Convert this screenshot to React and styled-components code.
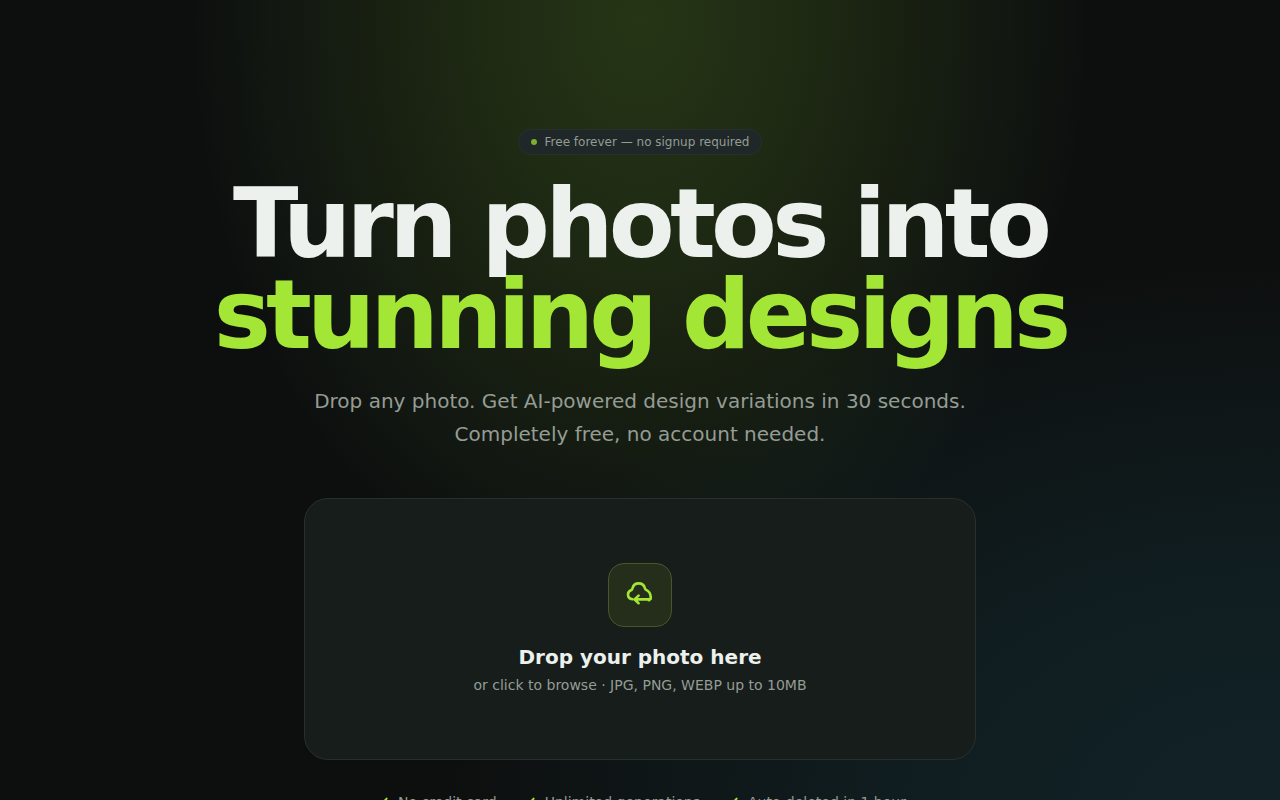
import React from 'react';
import styled, { createGlobalStyle } from 'styled-components';

const theme = {
  bg: '#0d0f0e',
  surface: '#171d1b',
  border: '#28302d',
  text: '#ecf1ee',
  muted: '#949c94',
  lime: '#a3e635',
};

const GlobalStyle = createGlobalStyle`
  * {
    box-sizing: border-box;
  }

  body {
    margin: 0;
    background: ${theme.bg};
    color: ${theme.text};
    font-family: 'DejaVu Sans', sans-serif;
  }
`;

const Hero = styled.main`
  display: flex;
  flex-direction: column;
  align-items: center;
  min-height: 100vh;
  padding: 129px 24px 64px;
  overflow: hidden;
  background:
    radial-gradient(ellipse 450px 600px at 50% 20px, rgba(150, 225, 55, 0.18), rgba(150, 225, 55, 0.13) 35%, rgba(150, 225, 55, 0.08) 60%, rgba(130, 225, 100, 0.04) 82%, transparent),
    radial-gradient(ellipse 840px 560px at 100% 820px, rgba(34, 110, 135, 0.2), rgba(34, 110, 135, 0.16) 40%, rgba(34, 110, 135, 0.07) 75%, transparent),
    ${theme.bg};
`;

const Badge = styled.div`
  display: flex;
  align-items: center;
  gap: 8px;
  margin: 0 0 24px;
  padding: 4px 12px;
  background: #1f2728;
  border: 1px solid #28302d;
  border-radius: 999px;
  color: ${theme.muted};
  font-size: 12px;
  line-height: 16px;
`;

const Dot = styled.span`
  width: 6px;
  height: 6px;
  border-radius: 50%;
  background: #7eb02d;
`;

const Title = styled.h1`
  margin: 0 0 24px;
  font-size: 96px;
  font-weight: 700;
  line-height: 91px;
  letter-spacing: -0.05em;
  text-align: center;
`;

const Accent = styled.span`
  display: block;
  color: ${theme.lime};
`;

const Lead = styled.p`
  max-width: 672px;
  margin: 0 0 47px;
  color: ${theme.muted};
  font-size: 20px;
  line-height: 33px;
  text-align: center;
`;

const DropZone = styled.button`
  display: flex;
  flex-direction: column;
  align-items: center;
  width: 100%;
  max-width: 672px;
  padding: 64px 32px;
  background: ${theme.surface};
  border: 1px solid ${theme.border};
  border-radius: 24px;
  color: ${theme.text};
  font-family: inherit;
  cursor: pointer;
`;

const IconTile = styled.span`
  display: flex;
  align-items: center;
  justify-content: center;
  width: 64px;
  height: 64px;
  margin: 0 0 16px;
  background: #242e1a;
  border: 1px solid #43592a;
  border-radius: 16px;
  color: ${theme.lime};
`;

const DropTitle = styled.span`
  font-size: 20px;
  font-weight: 700;
  line-height: 28px;
`;

const DropHint = styled.span`
  margin: 4px 0 0;
  color: ${theme.muted};
  font-size: 14px;
  line-height: 20px;
`;

const Perks = styled.ul`
  display: flex;
  flex-wrap: wrap;
  justify-content: center;
  gap: 8px 24px;
  margin: 32px 0 0;
  padding: 0;
  list-style: none;
  color: ${theme.muted};
  font-size: 14px;
  line-height: 20px;
`;

const Perk = styled.li`
  display: flex;
  align-items: center;
  gap: 8px;

  svg {
    color: ${theme.lime};
  }
`;

const perks = ['No credit card', 'Unlimited generations', 'Auto-deleted in 1 hour'];

const UploadIcon = () => (
  <svg
    width="28"
    height="28"
    viewBox="0 0 28 28"
    fill="none"
    stroke="currentColor"
    strokeWidth="2.6"
    strokeLinecap="round"
    strokeLinejoin="round"
    aria-hidden="true"
  >
    <path d="M6.5 18.2C3.6 17.8 2 16 2 13.4c0-2 1.2-3.6 3.4-4.4C6 8.700 6.300 8 6.500 7.200 7.200 4.200 9.400 2.400 12.600 2.400c3.300 0 5.600 1.800 6.300 4.800.2.800.6 1.300 1.300 1.700 2.800 1.400 4.300 3.600 4.500 6.900v2" />
    <path d="M24 18.400H8.800M12.600 14.600l-4.200 3.800 4.200 3.800M22.800 19.200h.2" />
  </svg>
);

const CheckIcon = () => (
  <svg
    width="16"
    height="16"
    viewBox="0 0 24 24"
    fill="none"
    stroke="currentColor"
    strokeWidth="3"
    strokeLinecap="round"
    strokeLinejoin="round"
    aria-hidden="true"
  >
    <path d="M5 13l4 4L19 7" />
  </svg>
);

const App = () => (
  <>
    <GlobalStyle />
    <Hero>
      <Badge>
        <Dot />
        Free forever — no signup required
      </Badge>
      <Title>
        Turn photos into
        <Accent>stunning designs</Accent>
      </Title>
      <Lead>
        Drop any photo. Get AI-powered design variations in 30 seconds. Completely free, no account needed.
      </Lead>
      <DropZone type="button">
        <IconTile>
          <UploadIcon />
        </IconTile>
        <DropTitle>Drop your photo here</DropTitle>
        <DropHint>or click to browse · JPG, PNG, WEBP up to 10MB</DropHint>
      </DropZone>
      <Perks>
        {perks.map(perk => (
          <Perk key={perk}>
            <CheckIcon />
            {perk}
          </Perk>
        ))}
      </Perks>
    </Hero>
  </>
);

export default App;
